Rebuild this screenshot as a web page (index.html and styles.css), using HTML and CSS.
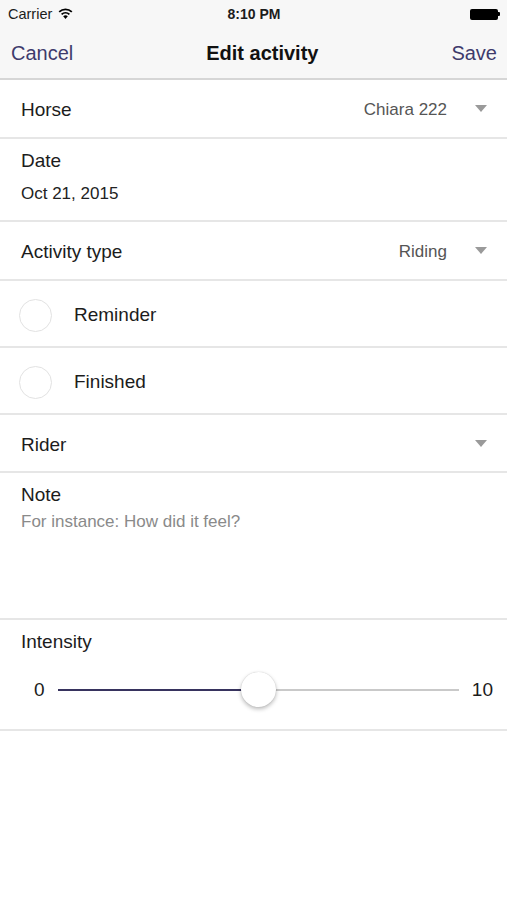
FILE: index.html
```html
<!DOCTYPE html>
<html>
    <head>
        <meta charset="utf-8">
        <title>Edit activity</title>
        <link rel="stylesheet" href="styles.css">
    </head>
    <body>
        <div class="status-bar">
            <div class="carrier">
                Carrier
                <svg class="wifi" width="15" height="11" viewBox="0 0 15 11">
                    <path d="M7.5 11 L5.2 8.3 A3.4 3.4 0 0 1 9.8 8.3 Z" fill="#000"/>
                    <path d="M3.6 6.4 A5.8 5.8 0 0 1 11.4 6.4" stroke="#000" stroke-width="1.8" fill="none"/>
                    <path d="M1.2 3.8 A9.3 9.3 0 0 1 13.8 3.8" stroke="#000" stroke-width="1.8" fill="none"/>
                </svg>
            </div>
            <div class="clock">8:10 PM</div>
            <div class="battery">
                <span class="battery-body"></span><span class="battery-nub"></span>
            </div>
        </div>

        <div class="nav-bar">
            <span class="nav-btn">Cancel</span>
            <span class="nav-title">Edit activity</span>
            <span class="nav-btn">Save</span>
        </div>

        <div class="form">
            <div class="row">
                <span class="label">Horse</span>
                <span class="value">Chiara 222</span>
                <span class="caret"></span>
            </div>
            <div class="block date-block">
                <div class="label">Date</div>
                <div class="date-value">Oct 21, 2015</div>
            </div>
            <div class="row">
                <span class="label">Activity type</span>
                <span class="value">Riding</span>
                <span class="caret"></span>
            </div>
            <div class="row check-row">
                <span class="check"></span>
                <span class="label">Reminder</span>
            </div>
            <div class="row check-row">
                <span class="check"></span>
                <span class="label">Finished</span>
            </div>
            <div class="row rider-row">
                <span class="label">Rider</span>
                <span class="value"></span>
                <span class="caret"></span>
            </div>
            <div class="block note-block">
                <div class="label">Note</div>
                <div class="placeholder">For instance: How did it feel?</div>
            </div>
            <div class="block intensity-block">
                <div class="label">Intensity</div>
                <div class="slider">
                    <span class="slider-num">0</span>
                    <div class="track">
                        <div class="track-fill" style="width: 50%"></div>
                        <div class="thumb" style="left: 50%"></div>
                    </div>
                    <span class="slider-num">10</span>
                </div>
            </div>
        </div>
    </body>
</html>
```

FILE: styles.css
```css
body {
    margin: 0;
    padding: 0;
    background: #fff;
    font-family: "Liberation Sans", Arial, sans-serif;
    color: #1c1c1c;
}

.status-bar {
    height: 28px;
    background: #f7f7f7;
    display: grid;
    grid-template-columns: 1fr auto 1fr;
    align-items: center;
    padding: 0 7px 0 8px;
}
.carrier {
    font-size: 14.5px;
    display: flex;
    align-items: center;
    gap: 6px;
}
.wifi {
    margin-top: -2px;
}
.clock {
    font-size: 14px;
    font-weight: bold;
}
.battery {
    justify-self: end;
    display: flex;
    align-items: center;
}
.battery-body {
    width: 28px;
    height: 11px;
    background: #000;
    border-radius: 2px;
}
.battery-nub {
    width: 2px;
    height: 4px;
    background: #000;
    border-radius: 0 1px 1px 0;
}

.nav-bar {
    height: 50px;
    background: #f7f7f7;
    border-bottom: 2px solid #d6d6d6;
    display: flex;
    align-items: center;
    justify-content: space-between;
    padding: 0 10px 0 11px;
    font-size: 20px;
}
.nav-btn {
    color: #3e3b6c;
}
.nav-title {
    font-weight: bold;
    color: #111;
}

.row {
    height: 57px;
    box-sizing: border-box;
    border-bottom: 2px solid #e6e6e6;
    display: flex;
    align-items: center;
    padding: 3px 20px 0 21px;
    height: 59px;
}
.label {
    font-size: 19px;
    flex: 1;
}
.value {
    font-size: 17px;
    color: #555;
}
.caret {
    width: 0;
    height: 0;
    border-left: 6px solid transparent;
    border-right: 6px solid transparent;
    border-top: 7px solid #9a9a9a;
    margin-left: 28px;
    margin-top: -3px;
}
.check-row {
    height: 67px;
    padding-left: 19px;
}
.check {
    width: 31px;
    height: 31px;
    border: 1.5px solid #e2e2e2;
    border-radius: 50%;
    margin-right: 22px;
}
.rider-row {
    height: 58px;
}

.block {
    border-bottom: 2px solid #e6e6e6;
    padding: 10px 20px 0 21px;
    box-sizing: border-box;
}
.block .label {
    line-height: 24px;
}
.date-block {
    height: 83px;
}
.date-value {
    font-size: 17px;
    line-height: 22px;
    margin-top: 10px;
    color: #222;
}
.note-block {
    height: 147px;
}
.placeholder {
    font-size: 17px;
    line-height: 20px;
    margin-top: 5px;
    color: #8a8a8a;
}
.intensity-block {
    height: 111px;
}

.slider {
    height: 40px;
    margin: 16px -6px 0 0;
    display: flex;
    align-items: center;
    gap: 13px;
    padding-left: 13px;
}
.slider-num {
    font-size: 19px;
}
.track {
    flex: 1;
    height: 2px;
    background: #c9c9c9;
    position: relative;
}
.track-fill {
    height: 2px;
    background: #37335e;
}
.thumb {
    position: absolute;
    top: -17px;
    width: 35px;
    height: 35px;
    margin-left: -17.5px;
    border-radius: 50%;
    background: #fff;
    box-shadow: 0 2px 4px rgba(0, 0, 0, 0.28), 0 0 1px rgba(0, 0, 0, 0.2);
}
```
